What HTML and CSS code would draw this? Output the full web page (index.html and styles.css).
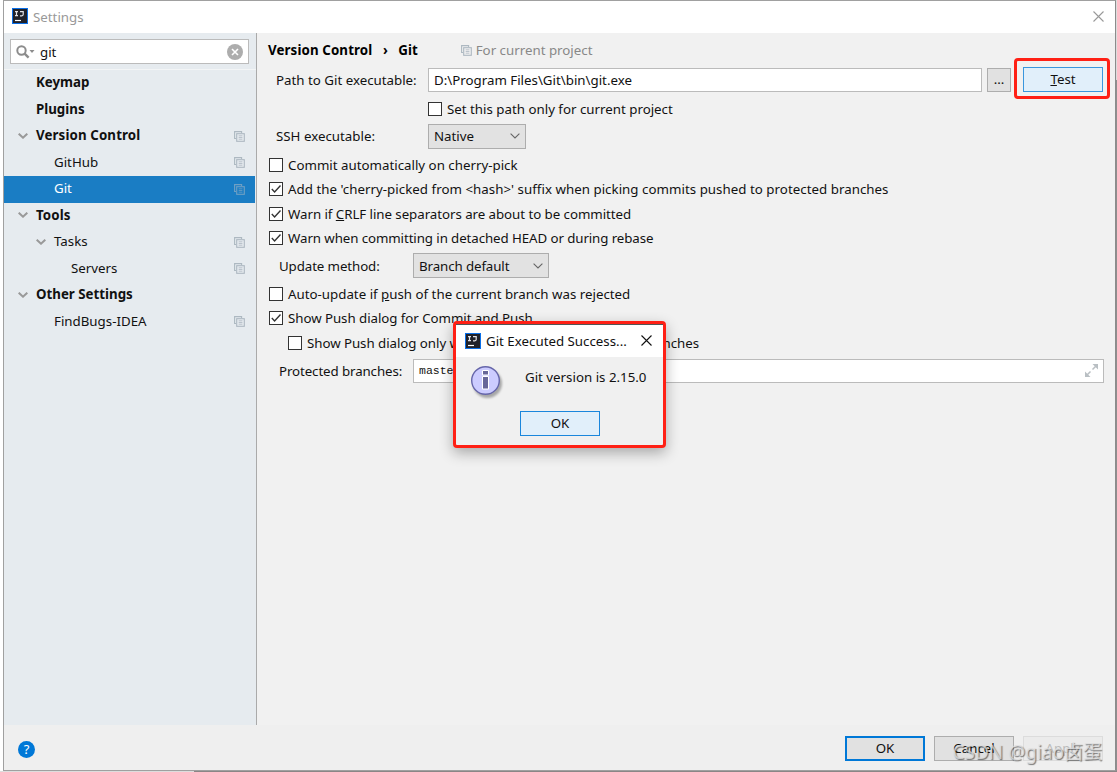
FILE: index.html
```html
<!DOCTYPE html>
<html lang="en">
  <head>
    <meta charset="UTF-8" />
    <meta name="viewport" content="width=device-width, initial-scale=1.0" />
    <title>Settings</title>

    <link rel="stylesheet" href="styles.css">
  </head>

  <body>
    <svg class="defs">
      <symbol id="logo" viewBox="0 0 16 16">
        <rect x=".5" y=".5" width="15" height="15" fill="#20222a" stroke="#0a6fe8" />
        <path d="M3 3.600h3M4.500 3.600v4M3 7.600h3M8 3.600h3.200v3q0 1.200-1.400 1.200H8" fill="none" stroke="#e4e4e8" stroke-width="1.200" />
        <path d="M3 12.500h6" stroke="#fff" stroke-width="1.200" />
      </symbol>
      <symbol id="copy" viewBox="0 0 11 11">
        <path d="M2 7.500H.6V.6h7v1.400" fill="none" stroke="currentColor" stroke-width="1.100" />
        <rect x="2.700" y="2.700" width="7.600" height="7.600" fill="none" stroke="currentColor" stroke-width="1.100" />
        <path d="M4.700 4.800h3.700M4.700 6.500h3.700M4.700 8.200h3.700" stroke="currentColor" stroke-width=".8" />
      </symbol>
      <symbol id="arrow" viewBox="0 0 10 6">
        <path d="M.7.7 5 4.700 9.300.7" fill="none" stroke="currentColor" stroke-width="2" />
      </symbol>
      <symbol id="chevron" viewBox="0 0 10 6">
        <path d="M.6.6 5 5 9.400.6" fill="none" stroke="currentColor" stroke-width="1.100" />
      </symbol>
      <symbol id="close" viewBox="0 0 11 11">
        <path d="M.5.5l10 10M10.500.5l-10 10" stroke="currentColor" stroke-width="1.100" />
      </symbol>
      <symbol id="tick" viewBox="0 0 14 14">
        <path d="M2.800 7 5.600 9.900 11.500 3.600" fill="none" stroke="#333" stroke-width="1.400" />
      </symbol>
    </svg>

    <div class="window">
      <header class="titlebar">
        <svg class="logo"><use href="#logo" /></svg>
        <span class="title">Settings</span>
        <svg class="close"><use href="#close" /></svg>
      </header>

      <div class="content">
        <aside class="sidebar">
          <div class="search">
            <svg class="lens" viewBox="0 0 20 14">
              <circle cx="5.500" cy="5.500" r="4.200" fill="none" stroke="#8c8c8c" stroke-width="2" />
              <path d="m8.600 8.600 4 4" stroke="#8c8c8c" stroke-width="2.400" />
              <path d="M13.500 5h5L16 8z" fill="#8c8c8c" />
            </svg>
            <span class="query">git</span>
            <svg class="clear" viewBox="0 0 16 16">
              <circle cx="8" cy="8" r="8" fill="#adadad" />
              <path d="m5 5 6 6M11 5l-6 6" stroke="#fff" stroke-width="1.600" />
            </svg>
          </div>
          <ul class="tree">
            <li class="group"><span>Keymap</span></li>
            <li class="group"><span>Plugins</span></li>
            <li class="group"><svg class="arrow"><use href="#arrow" /></svg><span class="wide">Version Control</span><svg class="copy"><use href="#copy" /></svg></li>
            <li class="child"><span>GitHub</span><svg class="copy"><use href="#copy" /></svg></li>
            <li class="child selected"><span>Git</span><svg class="copy"><use href="#copy" /></svg></li>
            <li class="group"><svg class="arrow"><use href="#arrow" /></svg><span class="wide">Tools</span></li>
            <li class="child"><svg class="arrow"><use href="#arrow" /></svg><span>Tasks</span><svg class="copy"><use href="#copy" /></svg></li>
            <li class="grandchild"><span>Servers</span><svg class="copy"><use href="#copy" /></svg></li>
            <li class="group"><svg class="arrow"><use href="#arrow" /></svg><span>Other Settings</span></li>
            <li class="child"><span>FindBugs-IDEA</span><svg class="copy"><use href="#copy" /></svg></li>
          </ul>
        </aside>

        <main class="panel">
          <div class="breadcrumb">
            <b class="wide">Version Control</b><b class="sep">›</b><b>Git</b>
            <svg class="copy"><use href="#copy" /></svg>
            <span class="scope">For current project</span>
          </div>

          <div class="row path">
            <label>Path to Git executable:</label>
            <div class="input">D:\Program Files\Git\bin\git.exe</div>
            <div class="button browse">...</div>
            <div class="marker"><div class="button focused"><u>T</u>est</div></div>
          </div>
          <div class="check only-project"><i class="box"></i><span>Set this path only for current project</span></div>
          <div class="row ssh">
            <label>SSH executable:</label>
            <div class="select">Native<svg class="chevron"><use href="#chevron" /></svg></div>
          </div>

          <div class="check"><i class="box"></i><span>Commit automatically on cherry-pick</span></div>
          <div class="check"><i class="box"><svg><use href="#tick" /></svg></i><span class="suffix">Add the 'cherry-picked from &lt;hash&gt;' suffix when picking commits pushed to protected branches</span></div>
          <div class="check"><i class="box"><svg><use href="#tick" /></svg></i><span class="tight">Warn if <u>C</u>RLF line separators are about to be committed</span></div>
          <div class="check"><i class="box"><svg><use href="#tick" /></svg></i><span class="tighter">Warn when committing in detached HEAD or during rebase</span></div>

          <div class="row update">
            <label>Update method:</label>
            <div class="select">Branch default<svg class="chevron"><use href="#chevron" /></svg></div>
          </div>

          <div class="check"><i class="box"></i><span>Auto-update if <u>p</u>ush of the current branch was rejected</span></div>
          <div class="check"><i class="box"><svg><use href="#tick" /></svg></i><span class="tight">Show Push dialog for Commit and Push</span></div>
          <div class="check nested"><i class="box"></i><span class="tight">Show Push dialog only when committing to protected branches</span></div>

          <div class="row protected">
            <label>Protected branches:</label>
            <div class="input mono">master
              <svg class="expand" viewBox="0 0 13 13">
                <path d="M7.500 0H13v5.500zM0 7.500V13h5.500z" fill="#b9bfc3" />
                <path d="m11 2-3.500 3.500M2 11l3.500-3.500" stroke="#b9bfc3" stroke-width="1.500" />
              </svg>
            </div>
          </div>
        </main>
      </div>

      <footer class="footer">
        <svg class="help" viewBox="0 0 17 17">
          <circle cx="8.500" cy="8.500" r="8.500" fill="#0078d7" />
          <text x="8.500" y="13" text-anchor="middle" fill="#fff" font-size="13">?</text>
        </svg>
        <div class="button default">OK</div>
        <div class="button">Cancel</div>
        <div class="button disabled">Apply</div>
      </footer>
    </div>

    <div class="dialog">
      <div class="dialog-title">
        <svg class="logo"><use href="#logo" /></svg>
        <span>Git Executed Success...</span>
        <svg class="close"><use href="#close" /></svg>
      </div>
      <div class="dialog-body">
        <svg class="info" viewBox="0 0 32 32">
          <circle cx="14.500" cy="14.500" r="13.800" fill="#ccf" stroke="#66a" stroke-width="1.400" />
          <path d="M11.500 4.500h6v4.500h-6zM11.500 10.500h6v12.500h-6z" fill="#669" stroke="#fff" />
        </svg>
        <span>Git version is 2.15.0</span>
      </div>
      <div class="button focused">OK</div>
    </div>

    <div class="watermark">CSDN @giao卤蛋</div>
  </body>
</html>
```

FILE: styles.css
```css
html,
body {
  height: 100%;
  margin: 0;
  padding: 0;
}

* {
  box-sizing: border-box;
}

/* slivers of the desktop show past the right and bottom window edges */
body {
  position: relative;
  overflow: hidden;
  background:
    linear-gradient(to right, #ddd 194px, #8a8686 194px) 0 100% / 100% 1px no-repeat,
    linear-gradient(#ddd 80px, #8e8e8e 80px) 100% 0 / 1px 100% no-repeat,
    #fff;
  font: 13.3px/20px "Noto Sans", "Noto Sans CJK SC", sans-serif;
  color: #111;
  white-space: nowrap;
}

svg {
  display: block;
  flex: none;
}

.defs {
  position: absolute;
  width: 0;
  height: 0;
}

.window {
  margin-left: 3px;
  width: 1113px;
  height: 771px;
  border: 1px solid #a0a0a0;
  border-right-color: #8c8c8c;
  display: flex;
  flex-direction: column;
  background: #f1f1f1;
}

.titlebar {
  height: 32px;
  padding: 0 11px 2px 8px;
  display: flex;
  align-items: center;
  background: #fff;
  color: #999;
}

.logo {
  width: 16px;
  height: 16px;
}

.title {
  margin: 1px 0 0 5px;
}

.close {
  width: 11px;
  height: 11px;
  margin-left: auto;
}

.content {
  height: 692px;
  display: flex;
}

.sidebar {
  width: 253px;
  padding-top: 6px;
  background: #e6ebef;
  border-right: 1px solid #aaa;
}

.search {
  width: 239px;
  height: 25px;
  margin: 0 0 5px 6px;
  padding: 0 5px;
  display: flex;
  align-items: center;
  background: #fff;
  border: 1px solid #bbb;
}

.lens {
  width: 20px;
  height: 14px;
}

.query {
  margin-left: 4px;
}

.clear {
  width: 16px;
  height: 16px;
  margin-left: auto;
}

.tree {
  margin: 0;
  padding: 0;
  list-style: none;
  border-top: 1px solid #f3f5f6;
}

.tree li {
  height: 26.5px;
  padding: 0 11px 2px 32px;
  display: flex;
  align-items: center;
}

.tree .group {
  font-weight: bold;
}

.tree .child {
  padding-left: 50px;
}

.tree .grandchild {
  padding-left: 67px;
}

.tree .selected {
  margin-right: 1px;
  padding-right: 10px;
  background: #1a7dc4;
  color: #fff;
}

.arrow {
  width: 10px;
  height: 6px;
  margin: 1px 8px 0 -18px;
  color: #999;
}

.copy {
  width: 11px;
  height: 11px;
  color: #adb8c1;
}

.tree .copy {
  margin: 2px 0 0 auto;
}

.selected .copy {
  color: #70a0c4;
}

.panel {
  flex: 1;
  padding: 0 11px;
}

.breadcrumb {
  height: 35px;
  padding-bottom: 1px;
  display: flex;
  align-items: center;
  color: #000;
}

.breadcrumb .sep {
  width: 26px;
  text-align: center;
}

.breadcrumb .copy {
  margin: 0 4px 0 43px;
}

.scope {
  color: #888;
}

.wide {
  letter-spacing: 0.12px;
}

.suffix {
  letter-spacing: 0.03px;
}

.tight {
  letter-spacing: -0.05px;
}

.tighter {
  letter-spacing: -0.09px;
}

.row {
  height: 24px;
  display: flex;
  align-items: center;
}

.path {
  margin-bottom: 5px;
}

.path label,
.ssh label {
  width: 160px;
  padding-left: 8px;
}

.input {
  flex: 1;
  height: 24px;
  padding: 0 5px;
  line-height: 22px;
  background: #fff;
  border: 1px solid #bbb;
}

.path .input {
  flex: none;
  width: 554px;
}

.button {
  width: 80px;
  height: 25px;
  line-height: 23px;
  text-align: center;
  background: #e1e1e1;
  border: 1px solid #adadad;
}

.browse {
  width: 24px;
  height: 24px;
  line-height: 20px;
  margin: 0 3px 0 5px;
}

/* red frame drawn round the Test button */
.marker {
  width: 96px;
  height: 41px;
  flex: none;
  margin-right: -10px;
  margin-top: -4px;
  padding: 6px;
  border: 3px solid #ff2015;
  border-radius: 4px;
}

.focused {
  background: #e1effa;
  border: 1px solid #1a86dc;
}

.marker .button {
  width: 80px;
  border-color: #3a96dd;
}

.check {
  height: 24.3px;
  display: flex;
  align-items: center;
}

.box {
  width: 14px;
  height: 14px;
  flex: none;
  margin: 0 5px 0 1px;
  background: #fff;
  border: 1px solid #333;
}

.box svg {
  width: 14px;
  height: 14px;
  margin: -1px;
}

.only-project {
  margin-left: 159px;
}

.only-project .box {
  margin-bottom: 1px;
}

.ssh {
  margin: 3px 0 4.5px;
}

.select {
  width: 98px;
  height: 25px;
  padding: 0 5px;
  display: flex;
  align-items: center;
  justify-content: space-between;
  background: #e2e2e2;
  border: 1px solid #adadad;
}

.chevron {
  width: 10px;
  height: 6px;
  color: #666;
}

.update {
  margin: 4px 0;
}

.update .select {
  width: 136px;
  letter-spacing: -0.1px;
}

.update label,
.protected label {
  width: 145px;
  padding-left: 11px;
  letter-spacing: -0.1px;
}

.nested {
  margin-left: 19px;
}

.protected {
  margin-top: 4px;
}

.mono {
  display: flex;
  align-items: center;
  justify-content: space-between;
  font-family: "Liberation Mono", monospace;
  font-size: 11.5px;
}

.expand {
  width: 13px;
  height: 13px;
}

.footer {
  flex: 1;
  padding: 2px 12px 0 14px;
  display: flex;
  align-items: center;
  gap: 9px;
  background: #efefef;
}

.help {
  width: 17px;
  height: 17px;
  margin: 1px auto 0 0;
}

.default {
  border: 2px solid #0078d7;
  line-height: 21px;
}

.disabled {
  background: #ebebeb;
  border-color: #dcdcdc;
  color: #bbb;
}

.dialog {
  position: absolute;
  left: 453px;
  top: 321px;
  width: 213px;
  height: 127px;
  background: #f0f0f0;
  border: 3px solid #ff2015;
  border-radius: 4px;
  box-shadow: 0 5px 14px rgba(0, 0, 0, 0.3);
}

.dialog-title {
  height: 33px;
  padding: 0 11px 1px 9px;
  display: flex;
  align-items: center;
  background: #fff;
  border-top: 1px solid #555;
}

.dialog-title span {
  margin: 1px 0 0 5px;
}

.dialog-body {
  height: 54px;
  padding: 8px 0 0 15px;
  display: flex;
}

.dialog-body span {
  margin: 2px 0 0 22px;
}

.info {
  width: 32px;
  height: 32px;
  margin-top: 1px;
  filter: drop-shadow(2px 3px 1px rgba(0, 0, 0, 0.3));
}

.dialog .button {
  margin-left: 64px;
}

.watermark {
  position: absolute;
  right: 15px;
  bottom: 6px;
  font-size: 19px;
  line-height: 28px;
  color: rgba(225, 225, 225, 0.75);
  text-shadow: 1px 1px 1px rgba(0, 0, 0, 0.5);
}
```
